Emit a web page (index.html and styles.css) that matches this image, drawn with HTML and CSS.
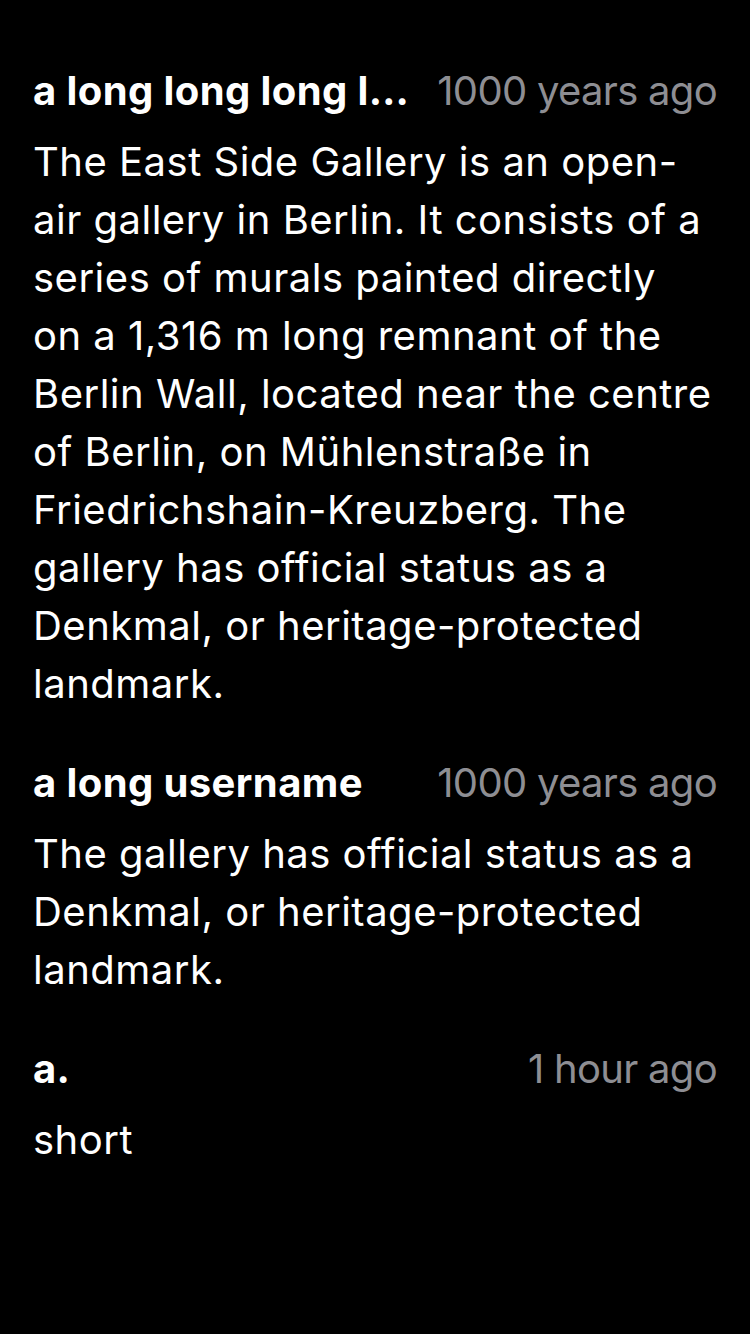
FILE: index.html
```html
<!DOCTYPE html>
<html lang="en">
<head>
<meta charset="utf-8">
<title>Comments</title>
<link rel="stylesheet" href="styles.css">
</head>
<body>
<main class="comments">
  <article class="comment">
    <header class="comment-head">
      <span class="author">a long long long long long username</span>
      <span class="time">1000 years ago</span>
    </header>
    <p class="comment-body">The East Side Gallery is an open-<br>air gallery in Berlin. It consists of a<br>series of murals painted directly<br>on a 1,316 m long remnant of the<br>Berlin Wall, located near the centre<br>of Berlin, on Mühlenstraße in<br>Friedrichshain-Kreuzberg. The<br>gallery has official status as a<br>Denkmal, or heritage-protected<br>landmark.</p>
  </article>
  <article class="comment">
    <header class="comment-head">
      <span class="author">a long username</span>
      <span class="time">1000 years ago</span>
    </header>
    <p class="comment-body">The gallery has official status as a<br>Denkmal, or heritage-protected<br>landmark.</p>
  </article>
  <article class="comment">
    <header class="comment-head">
      <span class="author">a.</span>
      <span class="time">1 hour ago</span>
    </header>
    <p class="comment-body">short</p>
  </article>
</main>
</body>
</html>
```
FILE: styles.css
```css
html, body {
  margin: 0;
  padding: 0;
  background: #000;
}
body {
  width: 750px;
  min-height: 1334px;
  font-family: Inter, "Noto Sans", "Liberation Sans", sans-serif;
  color: #fff;
}
.comments {
  display: flex;
  flex-direction: column;
  gap: 45px;
  padding: 66px 33px 0 33px;
}
.comment {
  display: flex;
  flex-direction: column;
  gap: 17px;
}
.comment-head {
  display: flex;
  justify-content: space-between;
  align-items: baseline;
  gap: 20px;
  height: 50px;
  line-height: 50px;
}
.author {
  font-size: 40px;
  font-weight: 700;
  min-width: 0;
  overflow: hidden;
  white-space: nowrap;
  text-overflow: ellipsis;
  letter-spacing: 0.4px;
}
.time {
  flex-shrink: 0;
  font-size: 40px;
  font-weight: 400;
  color: #8e8e93;
  letter-spacing: -0.7px;
}
.comment-body {
  margin: 0;
  font-size: 40px;
  line-height: 58px;
  letter-spacing: 0.5px;
  white-space: nowrap;
}
```
